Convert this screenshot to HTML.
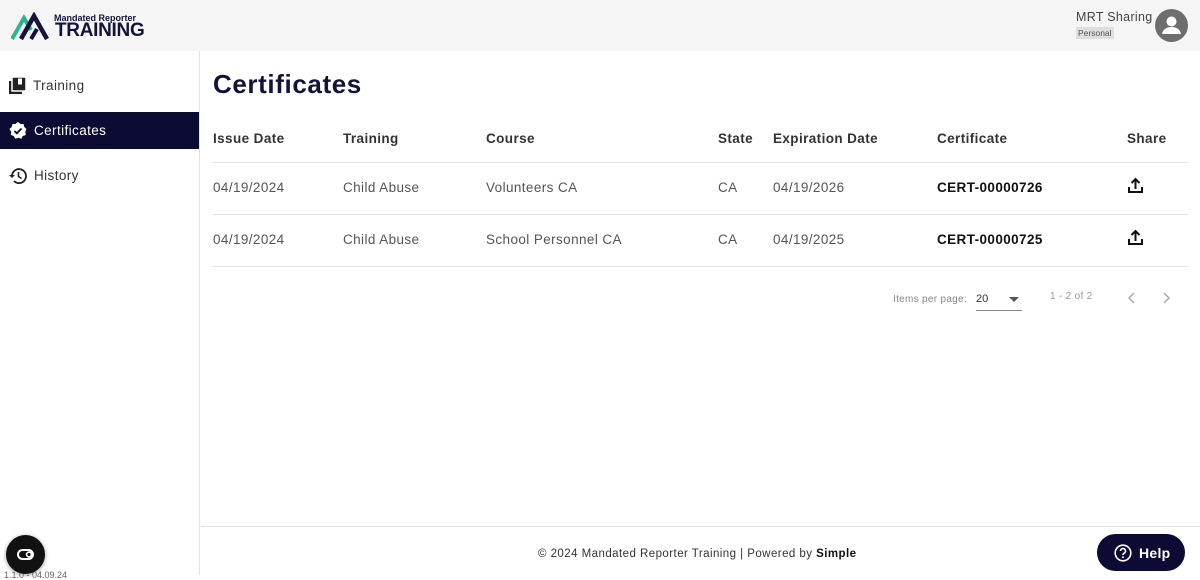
<!DOCTYPE html>
<html><head><style>
*{margin:0;padding:0;box-sizing:border-box}
body{width:1200px;height:575px;overflow:hidden;font-family:"Liberation Sans",sans-serif;background:#fff;position:relative;color:#333}
.hdr{position:absolute;left:0;top:0;width:1200px;height:51px;background:#f5f5f5}
.side{position:absolute;left:0;top:51px;width:200px;height:524px;border-right:1px solid #e3e3e3;background:#fff}
.nav{position:absolute;left:0;width:199px;height:37px;display:flex;align-items:center;padding-left:9px;font-size:13.5px;color:#333;letter-spacing:.4px}
.nav svg{margin-right:7px}
.nav.act{background:#0b0b33;color:#fff}
h1{position:absolute;left:213px;top:69px;font-size:26px;font-weight:bold;color:#12123a;letter-spacing:.6px}
.th,.td{position:absolute;font-size:13.5px;letter-spacing:.4px}
.th{font-weight:bold;color:#333;top:131px}
.line{position:absolute;left:213px;width:975px;height:1px;background:#e3e3e3}
.td{color:#555}
.b{font-weight:bold;color:#111}
.foot{position:absolute;left:201px;top:526px;width:999px;height:1px;background:#e3e3e3}
</style></head><body>
<div class="hdr">
<svg style="position:absolute;left:11px;top:12px" width="46" height="28" viewBox="0 0 46 28"><polyline points="1,27 13,6 20,18" fill="none" stroke="#2bb58f" stroke-width="4"/><polyline points="10,27 23,4 36,27" fill="none" stroke="#13133b" stroke-width="4.5"/><polyline points="20,27 26,17" fill="none" stroke="#13133b" stroke-width="4"/></svg>
<div style="position:absolute;left:54px;top:13px;font-size:9px;font-weight:bold;color:#13133b">Mandated Reporter</div>
<div style="position:absolute;left:55px;top:21px;font-size:19px;line-height:19px;font-weight:bold;color:#13133b;letter-spacing:-0.3px">TRAINING</div>
<div style="position:absolute;left:1076px;top:10px;font-size:12.5px;color:#444;letter-spacing:.3px">MRT Sharing</div>
<div style="position:absolute;left:1076px;top:27px;font-size:8.5px;color:#555;background:#dedede;padding:1px 2px">Personal</div>
<svg style="position:absolute;left:1155px;top:9px" width="33" height="33" viewBox="0 0 33 33"><circle cx="16.5" cy="16.5" r="16.5" fill="#6e6e6e"/><circle cx="16.5" cy="12.5" r="5" fill="#fff"/><path d="M7 25c1-5 5-7 9.5-7s8.5 2 9.5 7z" fill="#fff"/></svg>
</div>
<div class="side">
<div class="nav" style="top:16px"><svg width="17" height="17" viewBox="0 0 17 17"><rect x="0" y="4" width="13" height="13" fill="#222"/><rect x="3" y="0" width="14" height="14" fill="#222" stroke="#fff" stroke-width="1.5"/><rect x="9" y="1.5" width="4" height="6" fill="#fff"/></svg>Training</div>
<div class="nav act" style="top:61px"><svg width="18" height="18" viewBox="0 0 18 18"><path d="M9 0l2.5 2 3 0 .8 3 2.2 2-1.2 3 .5 3-3 1-1.5 2.7-3-1-3 1-1.5-2.7-3-1 .5-3L.5 7l2.2-2 .8-3 3 0z" fill="#fff"/><path d="M5.5 9l2.3 2.3L12.5 6.5" fill="none" stroke="#0b0b33" stroke-width="1.8"/></svg>Certificates</div>
<div class="nav" style="top:106px"><svg width="18" height="18" viewBox="0 0 18 18"><path d="M3 9a7 7 0 1 1 2 5" fill="none" stroke="#222" stroke-width="1.8"/><path d="M0 8l3 3 3-3z" fill="#222"/><path d="M9.5 5v4.5l3 2" fill="none" stroke="#222" stroke-width="1.6"/></svg>History</div>
<div style="position:absolute;left:4px;top:519px;font-size:9px;color:#666">1.1.0 - 04.09.24</div>
<div style="position:absolute;left:6px;top:484px;width:39px;height:39px;border-radius:50%;background:#111;box-shadow:0 1px 4px rgba(0,0,0,.4)"><svg width="39" height="39" viewBox="0 0 39 39"><rect x="12" y="15" width="15" height="9" rx="4.5" fill="none" stroke="#fff" stroke-width="2"/><circle cx="23" cy="19.5" r="2.4" fill="none" stroke="#fff" stroke-width="1.6"/></svg></div>
</div>
<h1>Certificates</h1>
<div class="th" style="left:213px">Issue Date</div>
<div class="th" style="left:343px">Training</div>
<div class="th" style="left:486px">Course</div>
<div class="th" style="left:718px">State</div>
<div class="th" style="left:773px">Expiration Date</div>
<div class="th" style="left:937px">Certificate</div>
<div class="th" style="left:1127px">Share</div>
<div class="line" style="top:162px"></div>
<div class="td" style="left:213px;top:180px">04/19/2024</div>
<div class="td" style="left:343px;top:180px">Child Abuse</div>
<div class="td" style="left:486px;top:180px">Volunteers CA</div>
<div class="td" style="left:718px;top:180px">CA</div>
<div class="td" style="left:773px;top:180px">04/19/2026</div>
<div class="td b" style="left:937px;top:180px">CERT-00000726</div>
<svg style="position:absolute;left:1127px;top:177px" width="17" height="17" viewBox="0 0 17 17"><path d="M2 10v5h13v-5" fill="none" stroke="#111" stroke-width="2"/><path d="M8.5 12V2M4.5 6l4-4 4 4" fill="none" stroke="#111" stroke-width="2"/></svg>
<div class="line" style="top:214px"></div>
<div class="td" style="left:213px;top:232px">04/19/2024</div>
<div class="td" style="left:343px;top:232px">Child Abuse</div>
<div class="td" style="left:486px;top:232px">School Personnel CA</div>
<div class="td" style="left:718px;top:232px">CA</div>
<div class="td" style="left:773px;top:232px">04/19/2025</div>
<div class="td b" style="left:937px;top:232px">CERT-00000725</div>
<svg style="position:absolute;left:1127px;top:229px" width="17" height="17" viewBox="0 0 17 17"><path d="M2 10v5h13v-5" fill="none" stroke="#111" stroke-width="2"/><path d="M8.5 12V2M4.5 6l4-4 4 4" fill="none" stroke="#111" stroke-width="2"/></svg>
<div class="line" style="top:266px"></div>
<div style="position:absolute;left:893px;top:294px;font-size:10px;color:#888;letter-spacing:.3px">Items per page:</div>
<div style="position:absolute;left:976px;top:293px;font-size:11px;color:#333">20</div>
<svg style="position:absolute;left:1009px;top:297px" width="10" height="5"><path d="M0 0h10L5 5z" fill="#555"/></svg>
<div style="position:absolute;left:976px;top:310px;width:46px;height:1px;background:#888"></div>
<div style="position:absolute;left:1050px;top:291px;font-size:10px;color:#999;letter-spacing:.3px">1 - 2 of 2</div>
<svg style="position:absolute;left:1127px;top:292px" width="44" height="12"><path d="M7 1L2 6l5 5M37 1l5 5-5 5" fill="none" stroke="#aaa" stroke-width="1.5"/></svg>
<div class="foot"></div>
<div style="position:absolute;left:538px;top:548px;font-size:11.5px;color:#333;letter-spacing:.45px">© 2024 Mandated Reporter Training | Powered by <b style="color:#111">Simple</b></div>
<div style="position:absolute;left:1097px;top:534px;width:88px;height:37px;border-radius:19px;background:#0b0b33;color:#fff;font-weight:bold;font-size:14px;display:flex;align-items:center;padding-left:17px;letter-spacing:.3px"><svg width="18" height="18" viewBox="0 0 18 18" style="margin-right:7px"><circle cx="9" cy="9" r="7.8" fill="none" stroke="#fff" stroke-width="1.6"/><path d="M6.5 7a2.5 2.5 0 1 1 3.5 2.3c-.8.4-1 .8-1 1.7" fill="none" stroke="#fff" stroke-width="1.6"/><circle cx="9" cy="13.3" r="1" fill="#fff"/></svg>Help</div>
</body></html>
